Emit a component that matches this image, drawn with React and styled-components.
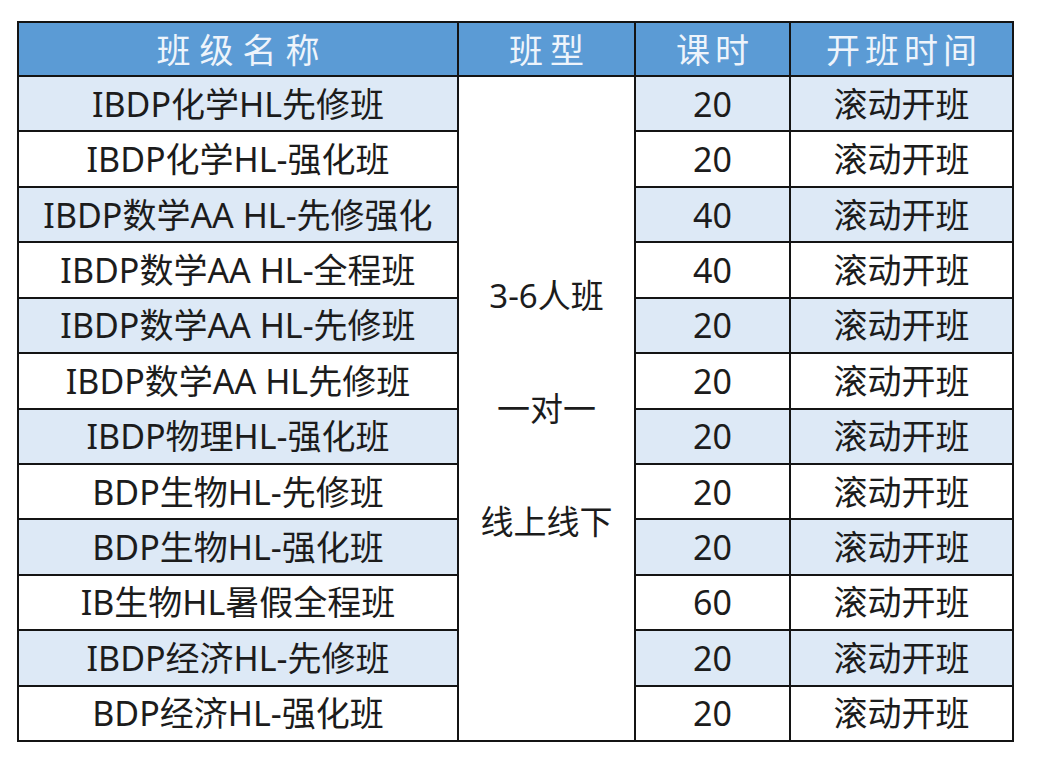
import React from "react";
import styled, { createGlobalStyle } from "styled-components";

const Global = createGlobalStyle`
  html, body { margin: 0; padding: 0; background: #ffffff; }
  body { font-family: "Noto Sans", "Noto Sans CJK SC", sans-serif; }
`;

const Page = styled.div`
  padding: 21px 0 0 17px;
`;

const Table = styled.div`
  width: 997px;
  height: 721px;
  box-sizing: border-box;
  padding: 2px;
  background: #141414;
  display: grid;
  grid-template-columns: 438px 175px 153px 221px;
  grid-template-rows: 52px repeat(12, 1fr);
  gap: 2px;
`;

const HeadCell = styled.div`
  background: #5b9bd5;
  color: #eef4fb;
  display: flex;
  align-items: center;
  justify-content: center;
  font-family: "Noto Sans CJK SC", sans-serif;
  font-weight: 400;
  font-size: 34px;
  letter-spacing: ${(p) => p.$spacing}px;
  padding-left: ${(p) => p.$spacing}px;
  line-height: 1;
`;

const Cell = styled.div`
  background: ${(p) => (p.$shade ? "#dde9f6" : "#ffffff")};
  color: #1c1c1c;
  display: flex;
  align-items: center;
  justify-content: center;
  font-family: "Noto Sans", "Noto Sans CJK SC", sans-serif;
  font-size: 34px;
  line-height: 1;
  white-space: nowrap;
`;

const MergedCell = styled.div`
  grid-column: 2;
  grid-row: 2 / span 12;
  background: #ffffff;
  color: #1c1c1c;
  display: flex;
  flex-direction: column;
  align-items: center;
  justify-content: center;
  gap: 80px;
  font-family: "Noto Sans", "Noto Sans CJK SC", sans-serif;
  font-size: 33px;
  line-height: 1;
`;

const rows = [
  ["IBDP化学HL先修班", "20"],
  ["IBDP化学HL-强化班", "20"],
  ["IBDP数学AA HL-先修强化", "40"],
  ["IBDP数学AA HL-全程班", "40"],
  ["IBDP数学AA HL-先修班", "20"],
  ["IBDP数学AA HL先修班", "20"],
  ["IBDP物理HL-强化班", "20"],
  ["BDP生物HL-先修班", "20"],
  ["BDP生物HL-强化班", "20"],
  ["IB生物HL暑假全程班", "60"],
  ["IBDP经济HL-先修班", "20"],
  ["BDP经济HL-强化班", "20"],
];

export default function App() {
  return (
    <Page>
      <Global />
      <Table>
        <HeadCell $spacing={9}>班级名称</HeadCell>
        <HeadCell $spacing={7}>班型</HeadCell>
        <HeadCell $spacing={5}>课时</HeadCell>
        <HeadCell $spacing={5}>开班时间</HeadCell>
        <MergedCell>
          <span>3-6人班</span>
          <span>一对一</span>
          <span>线上线下</span>
        </MergedCell>
        {rows.map(([name, hours], i) => (
          <React.Fragment key={i}>
            <Cell $shade={i % 2 === 0} style={{ gridColumn: 1, gridRow: i + 2 }}>
              {name}
            </Cell>
            <Cell $shade={i % 2 === 0} style={{ gridColumn: 3, gridRow: i + 2 }}>
              {hours}
            </Cell>
            <Cell $shade={i % 2 === 0} style={{ gridColumn: 4, gridRow: i + 2 }}>
              滚动开班
            </Cell>
          </React.Fragment>
        ))}
      </Table>
    </Page>
  );
}
